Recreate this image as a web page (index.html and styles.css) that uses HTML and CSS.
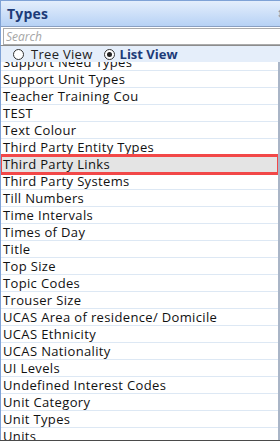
FILE: index.html
```html
<!DOCTYPE html>
<html lang="en">
<head>
    <meta charset="UTF-8">
    <title>Types</title>
    <link rel="stylesheet" href="styles.css">
</head>
<body>
    <div class="painel">
        <div class="cabecalho">
            <span class="titulo">Types</span>
            <span class="pino">&#8661;</span>
        </div>
        <div class="busca">
            <input type="text" placeholder="Search">
        </div>
        <div class="modos">
            <label class="modo"><span class="radio"></span>Tree View</label>
            <label class="modo ativo"><span class="radio marcado"></span>List View</label>
        </div>
        <div class="lista">
            <ul>
                <li>Support Need Types</li>
                <li>Support Unit Types</li>
                <li>Teacher Training Cou</li>
                <li>TEST</li>
                <li>Text Colour</li>
                <li>Third Party Entity Types</li>
                <li class="selecionado">Third Party Links</li>
                <li>Third Party Systems</li>
                <li>Till Numbers</li>
                <li>Time Intervals</li>
                <li>Times of Day</li>
                <li>Title</li>
                <li>Top Size</li>
                <li>Topic Codes</li>
                <li>Trouser Size</li>
                <li>UCAS Area of residence/ Domicile</li>
                <li>UCAS Ethnicity</li>
                <li>UCAS Nationality</li>
                <li>UI Levels</li>
                <li>Undefined Interest Codes</li>
                <li>Unit Category</li>
                <li>Unit Types</li>
                <li>Units</li>
            </ul>
        </div>
    </div>
</body>
</html>
```

FILE: styles.css
```css
body {
    margin: 0;
    font-family: 'Open Sans', 'Noto Sans', sans-serif;
    background: #fff;
}

.painel {
    width: 280px;
    height: 441px;
    overflow: hidden;
    display: flex;
    flex-direction: column;
    border-bottom: 1px solid #4a4a4a;
    box-sizing: border-box;
}

.cabecalho {
    height: 27px;
    flex: none;
    box-sizing: border-box;
    border-top: 1px solid #7fa2d6;
    border-left: 1px solid #7fa2d6;
    border-bottom: 1px solid #8aa0c2;
    background: linear-gradient(#e4eefc, #b7d2f5);
    display: flex;
    align-items: center;
    justify-content: space-between;
    padding-left: 6px;
}

.titulo {
    font-weight: bold;
    font-size: 14px;
    letter-spacing: 0.2px;
    color: #1d3b78;
}

.pino {
    font-size: 12px;
    color: #8893a6;
    margin-right: -6px;
}

.busca {
    flex: none;
    padding: 1px 0 0 2px;
    background: #fff;
    border-left: 1px solid #7fa2d6;
}

.busca input {
    display: block;
    width: 100%;
    height: 17px;
    box-sizing: border-box;
    border: 1px solid #ababab;
    border-right: none;
    padding: 0 2px;
    font-family: inherit;
    font-size: 12px;
    font-style: italic;
    outline: none;
}

.busca input::placeholder {
    color: #a6a6a6;
}

.modos {
    flex: none;
    height: 16px;
    background: #e5eefa;
    border-left: 1px solid #7fa2d6;
    border-top: 1px solid #8c8c8c;
    display: flex;
    align-items: center;
    gap: 11px;
    padding-left: 12px;
    font-size: 13px;
    letter-spacing: 0.3px;
}

.modo {
    display: flex;
    align-items: center;
    gap: 7px;
    color: #222;
}

.modo.ativo {
    font-weight: bold;
    letter-spacing: 0;
    gap: 5px;
    color: #1d3b78;
}

.radio {
    width: 9px;
    height: 9px;
    border: 1px solid #333;
    border-radius: 50%;
    background: #fff;
    position: relative;
}

.radio.marcado::after {
    content: "";
    position: absolute;
    left: 2px;
    top: 2px;
    width: 5px;
    height: 5px;
    border-radius: 50%;
    background: #222;
}

.lista {
    flex: 1;
    overflow: hidden;
    border-left: 1px solid #7fa2d6;
    border-right: 2px solid #a9b5c7;
}

.lista ul {
    list-style: none;
    margin: -8px 0 0 0;
    padding: 0;
}

.lista li {
    height: 16px;
    line-height: 16px;
    border-bottom: 1px solid #dde8f4;
    padding-left: 2px;
    font-size: 13px;
    letter-spacing: 0.35px;
    color: #111;
    white-space: nowrap;
}

.lista li.selecionado {
    background: #e4e4e4;
    outline: 3px solid #f24848;
    outline-offset: -1px;
    position: relative;
}
```
